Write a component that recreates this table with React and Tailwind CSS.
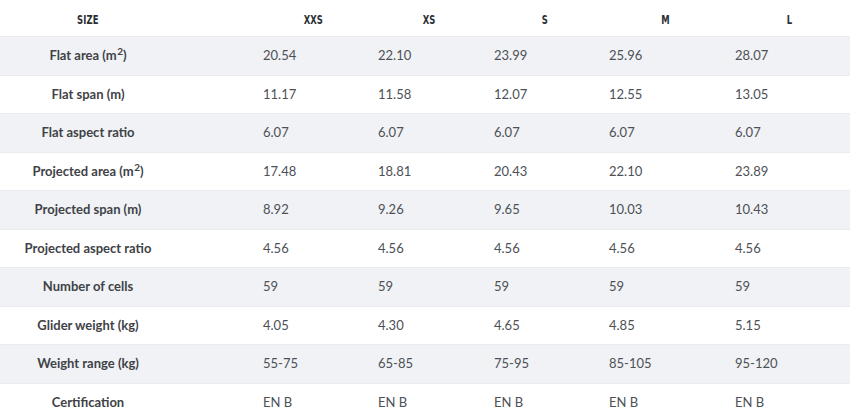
import React from "react";

const Sup = () => <span className="inline-block text-[10px] relative -top-[5px] ml-[0.5px]">2</span>;

const sizes = ["XXS", "XS", "S", "M", "L"];
const rows = [
  [<>Flat area (m<Sup />)</>, ["20.54", "22.10", "23.99", "25.96", "28.07"]],
  ["Flat span (m)", ["11.17", "11.58", "12.07", "12.55", "13.05"]],
  ["Flat aspect ratio", ["6.07", "6.07", "6.07", "6.07", "6.07"]],
  [<>Projected area (m<Sup />)</>, ["17.48", "18.81", "20.43", "22.10", "23.89"]],
  ["Projected span (m)", ["8.92", "9.26", "9.65", "10.03", "10.43"]],
  ["Projected aspect ratio", ["4.56", "4.56", "4.56", "4.56", "4.56"]],
  ["Number of cells", ["59", "59", "59", "59", "59"]],
  ["Glider weight (kg)", ["4.05", "4.30", "4.65", "4.85", "5.15"]],
  ["Weight range (kg)", ["55-75", "65-85", "75-95", "85-105", "95-120"]],
  ["Certification", ["EN B", "EN B", "EN B", "EN B", "EN B"]],
];

const grid = "grid grid-cols-[256px_115px_116px_115px_126px_1fr]";

export default function App() {
  return (
    <div className="w-[850px] h-[417px] overflow-hidden bg-white" style={{ fontFamily: "Lato, 'Open Sans', sans-serif" }}>
      <div className={`${grid} h-[36px] items-center text-[#2b2e33]`}>
        <div className="w-[176px] text-center">
          <span className="inline-block text-[12px] font-bold scale-x-[0.78] tracking-[0.2px]" style={{ fontFamily: "'Liberation Sans Narrow', 'DejaVu Sans Condensed', 'Liberation Sans', sans-serif" }}>SIZE</span>
        </div>
        {sizes.map((s) => (
          <div key={s} className="text-center">
            <span className="inline-block text-[12px] font-bold scale-x-[0.78]" style={{ fontFamily: "'Liberation Sans Narrow', 'DejaVu Sans Condensed', 'Liberation Sans', sans-serif" }}>{s}</span>
          </div>
        ))}
      </div>
      {rows.map(([label, vals], i) => (
        <div
          key={i}
          className={`${grid} h-[38.5px] shrink-0 items-center border-t border-[#e9ebee] ${i % 2 === 0 ? "bg-[#f0f2f5]" : "bg-white"}`}
        >
          <div className="w-[176px] text-center text-[13px] font-bold text-[#3f4247] leading-none">{label}</div>
          {vals.map((v, j) => (
            <div key={j} className="pl-[7px] text-[13px] text-[#4d5055] leading-none">{v}</div>
          ))}
        </div>
      ))}
    </div>
  );
}
